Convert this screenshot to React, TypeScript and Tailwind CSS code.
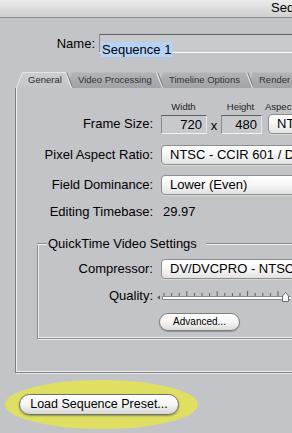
import React from "react";

const FONT = { fontFamily: '"Liberation Sans", Arial, sans-serif' };

function Tab({
  label,
  id,
  width,
  selected,
  z,
}: {
  label: string;
  id: string;
  width: number;
  selected?: boolean;
  z: number;
}) {
  const w = width;
  return (
    <div
      className="relative h-[16px] shrink-0 -ml-[6px] first:ml-0"
      style={{ width: w, zIndex: z }}
    >
      <svg className="absolute inset-0" width={w} height={16}>
        <defs>
          <linearGradient id={`tabgrad-${id}`} x1="0" y1="0" x2="0" y2="1">
            <stop offset="0" stopColor={selected ? "#cdced2" : "#b3b4b8"} />
            <stop offset="1" stopColor={selected ? "#c4c5c9" : "#a2a3a7"} />
          </linearGradient>
        </defs>
        <path
          d={`M0,16 L6,0.5 L${w - 6},0.5 L${w},16 Z`}
          fill={`url(#tabgrad-${id})`}
        />
        {selected && (
          <path d={`M0.5,16 L6.5,0.5 L${w - 6},0.5`} stroke="#e4e5e8" fill="none" />
        )}
        <path
          d={`M${w - 6.5},0.5 L${w - 0.5},16`}
          stroke="#eeeeee"
          strokeWidth="1"
          fill="none"
        />
        <path
          d={`M${w - 5.2},0.5 L${w + 0.8},16`}
          stroke="#7d7e82"
          strokeWidth="1"
          fill="none"
        />
      </svg>
      <span
        className={`relative block pl-[12px] text-[9.5px] leading-[16px] whitespace-nowrap ${
          selected ? "text-[#2a2a2a]" : "text-[#333333]"
        }`}
      >
        {label}
      </span>
    </div>
  );
}

function Popup({ text, width = 200 }: { text: string; width?: number }) {
  return (
    <div
      className="h-[20px] shrink-0 rounded-[4px] border border-[#8d8d8d] bg-gradient-to-b from-white via-[#f6f6f6] to-[#e2e2e2] pl-[8px] text-[13px] leading-[18px] text-black whitespace-nowrap shadow-[0_1px_0_#d8d8d8]"
      style={{ width }}
    >
      {text}
    </div>
  );
}

function Label({ w, children }: { w: number; children: React.ReactNode }) {
  return (
    <div
      className="shrink-0 text-right text-[13px] leading-[16px] text-black whitespace-nowrap"
      style={{ width: w }}
    >
      {children}
    </div>
  );
}

function Slider() {
  const ticks = [];
  for (let i = 0; i < 17; i++) {
    const x = 8 + i * 7.6;
    const tall = i % 4 === 3;
    ticks.push(
      <line
        key={i}
        x1={x}
        x2={x}
        y1={tall ? 1 : 3}
        y2={6}
        stroke="#5e5e5e"
        strokeWidth="1"
      />
    );
  }
  return (
    <svg width="135" height="12" className="shrink-0 block">
      <path d="M1,7.5 L4,5.5 L4,9.5 Z" fill="#555" />
      <rect x="6.5" y="6.5" width="140" height="3" fill="#ffffff" stroke="#8a8a8a" />
      {ticks}
      <path d="M126.5,11.5 L126.5,6 L129.5,2.5 L132.5,6 L132.5,11.5 Z" fill="#f7f7f7" stroke="#6d6d6d" />
    </svg>
  );
}

export default function App() {
  return (
    <div
      className="relative w-[292px] h-[433px] overflow-hidden bg-[#c3c4c8]"
      style={FONT}
    >
      {/* Title bar */}
      <div className="h-[18px] border-b border-[#8b8b8b] bg-gradient-to-b from-[#ececec] to-[#cfcfcf] pl-[271px] text-[13px] leading-[15px] text-black whitespace-nowrap">
        Sequence Settings
      </div>

      {/* Name row */}
      <div className="mt-[16px] flex items-center">
        <div className="w-[95px] shrink-0 text-right text-[13px] leading-[16px] text-black">
          Name:
        </div>
        <div className="ml-[4px] h-[19px] w-[220px] shrink-0 border-t border-l border-t-[#5f5f5f] border-l-[#8c8c8c] border-b border-b-white bg-[#c9cacd] pl-[1px] pt-[2px]">
          <span className="inline-block bg-[#b5d3f7] px-[1px] text-[13px] leading-[15px] text-black">
            Sequence 1
          </span>
        </div>
      </div>

      {/* Tabs */}
      <div className="mt-[19px] ml-[16px] flex">
        <Tab label="General" id="general" width={56} selected z={4} />
        <Tab label="Video Processing" id="video" width={97} z={3} />
        <Tab label="Timeline Options" id="timeline" width={96} z={2} />
        <Tab label="Render Control" id="render" width={90} z={1} />
      </div>

      {/* Panel */}
      <div className="ml-[15px] h-[285px] w-[300px] border-l border-b border-[#7f8084] shadow-[inset_1px_-1px_0_#eeeeee,1px_1px_0_#e8e8ea] pt-[13px]">
        {/* Width / Height header */}
        <div className="flex text-[9.5px] leading-[11px] text-[#222]">
          <div className="w-[145px] shrink-0" />
          <div className="w-[45px] shrink-0 text-center">Width</div>
          <div className="w-[14px] shrink-0" />
          <div className="w-[41px] shrink-0 text-center">Height</div>
          <div className="ml-[4px] whitespace-nowrap">Aspect Ratio</div>
        </div>

        {/* Frame Size */}
        <div className="mt-[2px] flex items-center">
          <Label w={137}>Frame Size:</Label>
          <div className="ml-[8px] h-[19px] w-[46px] shrink-0 border border-t-[#5f5f5f] border-l-[#8a8a8a] border-r-[#e4e4e4] border-b-[#f2f2f2] bg-[#c8c9cd] pr-[4px] text-right text-[13px] leading-[17px]">
            720
          </div>
          <div className="w-[14px] shrink-0 pt-[4px] text-center text-[13px] leading-[16px]">x</div>
          <div className="h-[19px] w-[41px] shrink-0 border border-t-[#5f5f5f] border-l-[#8a8a8a] border-r-[#e4e4e4] border-b-[#f2f2f2] bg-[#c8c9cd] pr-[4px] text-right text-[13px] leading-[17px]">
            480
          </div>
          <div className="ml-[6px]">
            <Popup text="NTSC (4:3)" width={120} />
          </div>
        </div>

        {/* Pixel Aspect Ratio */}
        <div className="mt-[11px] flex items-center">
          <Label w={137}>Pixel Aspect Ratio:</Label>
          <div className="ml-[8px]">
            <Popup text="NTSC - CCIR 601 / DV (720x480)" width={220} />
          </div>
        </div>

        {/* Field Dominance */}
        <div className="mt-[10px] flex items-center">
          <Label w={137}>Field Dominance:</Label>
          <div className="ml-[8px]">
            <Popup text="Lower (Even)" width={220} />
          </div>
        </div>

        {/* Editing Timebase */}
        <div className="mt-[8px] flex h-[18px] items-center">
          <Label w={137}>Editing Timebase:</Label>
          <div className="ml-[10px] text-[13px] leading-[16px] text-black">29.97</div>
        </div>

        {/* QuickTime group */}
        <div className="ml-[21px] mt-[16px] w-[300px]">
          <div className="flex h-[13px] items-center">
            <div className="h-[2px] w-[10px] shrink-0 border-t border-[#8a8b8f] border-b border-b-[#eeeeee]" />
            <div className="px-[1px] text-[13px] leading-[13px] text-black whitespace-nowrap">
              QuickTime Video Settings
            </div>
            <div className="ml-[8px] h-[2px] flex-1 border-t border-[#8a8b8f] border-b border-b-[#eeeeee]" />
          </div>
          <div className="-mt-[6px] h-[95px] border-l border-b border-[#8a8b8f] shadow-[inset_1px_-1px_0_#eeeeee,1px_1px_0_#ebebeb] pt-[15px]">
            <div className="flex items-center">
              <Label w={115}>Compressor:</Label>
              <div className="ml-[8px]">
                <Popup text="DV/DVCPRO - NTSC" width={200} />
              </div>
            </div>
            <div className="mt-[9px] flex items-center">
              <Label w={115}>Quality:</Label>
              <div className="ml-[3px]">
                <Slider />
              </div>
            </div>
            <div className="mt-[9px] ml-[121px] flex h-[18px] w-[81px] items-center justify-center rounded-full border border-[#7d7d7d] bg-gradient-to-b from-white via-[#f4f4f4] to-[#dcdcdc] text-[10px] leading-[12px] text-black shadow-[0_1px_1px_rgba(0,0,0,0.25)]">
              Advanced...
            </div>
          </div>
        </div>
      </div>

      {/* Highlight annotation */}
      <div className="absolute left-[5px] top-[380px] h-[49px] w-[193px] rounded-[50%] bg-[#dfe062] blur-[0.6px]" />

      {/* Load Sequence Preset button */}
      <div className="relative ml-[19px] mt-[21px] flex h-[21px] w-[160px] items-center justify-center rounded-full border border-[#6f6f6f] bg-gradient-to-b from-white via-[#f5f5f5] to-[#d6d6d6] text-[12.5px] leading-[15px] text-black shadow-[0_1px_2px_rgba(0,0,0,0.35)]">
        Load Sequence Preset...
      </div>
    </div>
  );
}
